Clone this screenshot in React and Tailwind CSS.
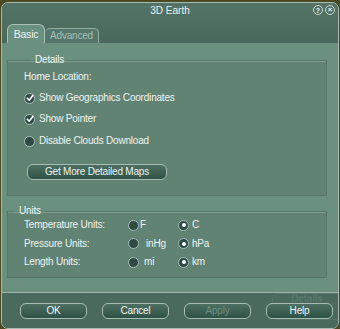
import React from "react";

function Check({ checked }) {
  return (
    <span className="w-[11px] h-[11px] rounded-full border border-[#a9bcc0] bg-[#2d4b41] flex items-center justify-center shrink-0">
      {checked && (
        <svg width="8" height="8" viewBox="0 0 8 8">
          <path d="M1.2 4.2 L3.2 6.2 L6.8 1.4" fill="none" stroke="#ffffff" strokeWidth="1.6" strokeLinecap="round" strokeLinejoin="round" />
        </svg>
      )}
    </span>
  );
}

function Radio({ on }) {
  return (
    <span className="w-[11px] h-[11px] rounded-full border border-[#a9bcc0] bg-[#2d4b41] flex items-center justify-center shrink-0">
      {on && <span className="w-[4px] h-[4px] rounded-full bg-white" />}
    </span>
  );
}

function Btn({ children, disabled }) {
  return (
    <div
      className={`w-[67px] h-[16px] rounded-[6px] border-[1.5px] border-[#a6bdb5] bg-gradient-to-b from-[#4d7063] to-[#2f5246] flex items-center justify-center ${
        disabled ? "text-[#6d8c80]" : "text-[#f2f5f3]"
      }`}
    >
      {children}
    </div>
  );
}

function UnitRow({ label, a, b, gapA }) {
  return (
    <div className="flex items-center h-[18.5px]">
      <span className="w-[120px] pl-[16px]">{label}</span>
      <div className={`w-[50px] flex items-center ${gapA}`}>
        <Radio on={false} />
        <span>{a}</span>
      </div>
      <div className="flex items-center gap-[3px]">
        <Radio on={true} />
        <span>{b}</span>
      </div>
    </div>
  );
}

export default function App() {
  return (
    <div className="w-[340px] h-[329px] bg-[#4a4922] pt-[2px] pl-[1px] font-['Liberation_Sans',Arial,sans-serif] text-[10px] leading-[12px] tracking-[-0.2px] text-[#eef3f0] overflow-hidden">
      <div className="w-[338px] h-[327px] rounded-[7px] border border-[#a7bbb3] overflow-hidden flex flex-col relative bg-[#4b6a5e]">
        {/* Title bar */}
        <div className="h-[40px] bg-gradient-to-b from-[#547367] to-[#4a695d] flex flex-col">
          <div className="h-[15px] flex items-center justify-center relative tracking-normal">
            <span>3D Earth</span>
            <div className="absolute right-[3px] top-[2px] flex gap-[2px]">
              <span className="w-[10px] h-[10px] rounded-full border border-[#c9d6d1] flex items-center justify-center text-[7px] font-bold leading-none">?</span>
              <span className="w-[10px] h-[10px] rounded-full border border-[#c9d6d1] flex items-center justify-center text-[8px] font-bold leading-none">×</span>
            </div>
          </div>
          <div className="flex-1 flex items-end pl-[5px]">
            <div className="w-[38px] h-[19px] rounded-t-[6px] border border-b-0 border-[#a9c0b7] bg-[#6a9080] flex items-center justify-center pb-[1px] text-[10.5px]">
              Basic
            </div>
            <div className="w-[54px] h-[15px] rounded-t-[5px] border border-b-0 border-l-0 border-[#93aea3] bg-[#55766a] flex items-center justify-center text-[#a9bfb6]">
              Advanced
            </div>
          </div>
        </div>

        {/* Content */}
        <div className="h-[249px] bg-[#6a9080] pl-[5px] pr-[11px] pt-[11px]">
          <fieldset className="h-[142px] border border-[#567669] bg-[#608374] shadow-[inset_0_1px_0_#7ea090] px-[16px]">
            <legend className="ml-[7px] px-[4px] leading-[12px]">Details</legend>
            <div className="mt-[5px]">Home Location:</div>
            <div className="mt-[9px] flex items-center gap-[4px] h-[12px]">
              <Check checked />
              <span>Show Geographics Coordinates</span>
            </div>
            <div className="mt-[9px] flex items-center gap-[4px] h-[12px]">
              <Check checked />
              <span>Show Pointer</span>
            </div>
            <div className="mt-[10px] flex items-center gap-[4px] h-[12px]">
              <Check checked={false} />
              <span>Disable Clouds Download</span>
            </div>
            <div className="mt-[17px] ml-[3px] w-[140px] h-[16px] rounded-[6px] border-[1.5px] border-[#a6bdb5] bg-gradient-to-b from-[#4d7063] to-[#2f5246] flex items-center justify-center">
              Get More Detailed Maps
            </div>
          </fieldset>

          <fieldset className="mt-[9px] h-[73px] border border-[#567669] bg-[#608374] shadow-[inset_0_1px_0_#7ea090]">
            <legend className="ml-[7px] px-[4px] leading-[12px]">Units</legend>
            <div className="mt-[-1px]">
              <UnitRow label="Temperature Units:" a="F" b="C" gapA="gap-[1px]" />
              <UnitRow label="Pressure Units:" a="inHg" b="hPa" gapA="gap-[7px]" />
              <UnitRow label="Length Units:" a="mi" b="km" gapA="gap-[5px]" />
            </div>
          </fieldset>
        </div>

        {/* Bottom bar */}
        <div className="flex-1 border-t border-[#9fb6ad] bg-[#4b6a5e] pl-[18px] pt-[10px] flex gap-[15px] relative">
          <div className="absolute left-[270px] top-[0px] w-[70px] h-[27px] rounded-[6px] border border-[#5f7f73] opacity-60 flex justify-center pt-[0px] leading-[9px] text-[#5f8174] font-bold">
            Details
          </div>
          <div className="relative flex gap-[15px]">
            <Btn>OK</Btn>
            <Btn>Cancel</Btn>
            <Btn disabled>Apply</Btn>
            <Btn>Help</Btn>
          </div>
        </div>
      </div>
    </div>
  );
}
